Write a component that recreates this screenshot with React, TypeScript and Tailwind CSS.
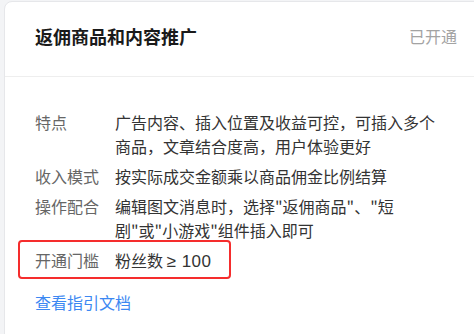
import React from 'react'

type Row = {
  label: string
  lines: React.ReactNode[]
  highlight?: boolean
}

const ROWS: Row[] = [
  { label: '特点', lines: ['广告内容、插入位置及收益可控，可插入多个', '商品，文章结合度高，用户体验更好'] },
  { label: '收入模式', lines: ['按实际成交金额乘以商品佣金比例结算'] },
  { label: '操作配合', lines: ['编辑图文消息时，选择"返佣商品"、"短', '剧"或"小游戏"组件插入即可'] },
  {
    label: '开通门槛',
    lines: [
      <>
        粉丝数{' '}
        <span className="text-[17px] tracking-[0.5px]" style={{ fontFamily: '"Liberation Sans", sans-serif' }}>
          ≥ 100
        </span>
      </>,
    ],
    highlight: true,
  },
]

export default function App() {
  return (
    <div
      className="h-[334px] w-[474px] overflow-hidden bg-[#f3f4f6] pl-[4px] pt-px"
      style={{ fontFamily: '"Noto Sans CJK SC", "Noto Sans", sans-serif' }}
    >
      <div className="w-[500px] h-[360px] bg-white border border-[#e6e7ea] rounded-tl-[8px]">
        <div className="flex items-start justify-between pl-[30px] pr-[46px] pt-[22px] pb-[28px] border-b border-[#eeeeee]">
          <span className="text-[18px] leading-[24px] font-bold text-[#1a1a1a]">返佣商品和内容推广</span>
          <span className="text-[16px] leading-[24px] text-[#a3a3a3]">已开通</span>
        </div>

        <div className="pl-[30px] pt-[33px]">
          <div className="flex flex-col gap-[6px]">
            {ROWS.map(r => (
              <div key={r.label} className="relative flex text-[16px] leading-[24px]">
                <span className="w-[80px] shrink-0 text-[#666666]">{r.label}</span>
                <div className="text-[#333333] whitespace-nowrap">
                  {r.lines.map((l, i) => (
                    <div key={i}>{l}</div>
                  ))}
                </div>
                {r.highlight && (
                  <div className="absolute left-[-17px] top-[-8px] w-[213px] h-[39px] border-2 border-[#f52d2d] rounded-[4px]" />
                )}
              </div>
            ))}
          </div>
          <a href="#" className="mt-[16px] block text-[16px] leading-[24px] text-[#3c88f2]">
            查看指引文档
          </a>
        </div>
      </div>
    </div>
  )
}
